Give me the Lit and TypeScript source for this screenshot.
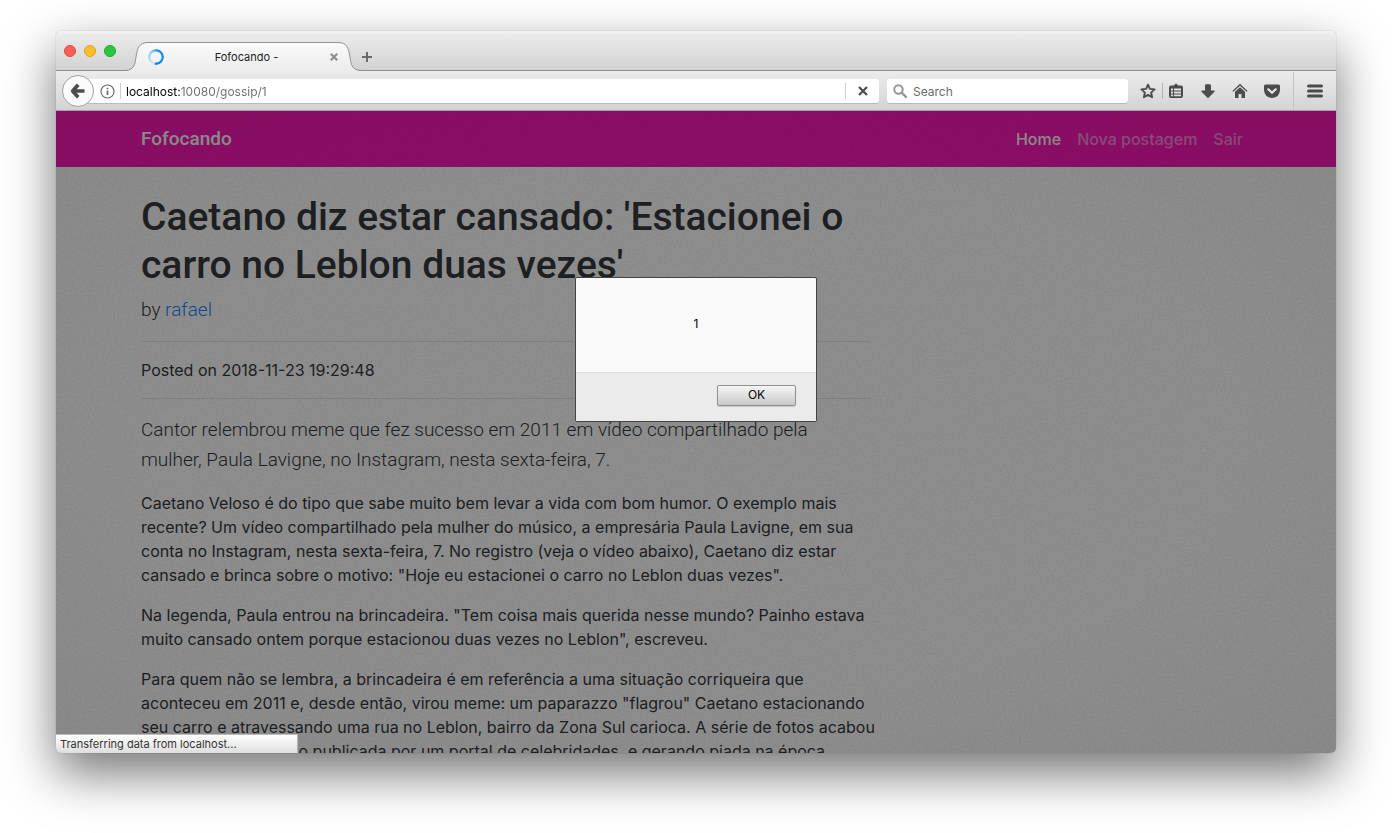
import { LitElement, html, css, svg } from "lit";
import { customElement } from "lit/decorators.js";

@customElement("tab-strip")
class TabStrip extends LitElement {
  static styles = css`
    :host { display: flex; align-items: flex-end; height: 40px; padding: 0 12px 0 8px; box-sizing: border-box;
      background: linear-gradient(#f4f4f4, #ebebeb 3px, #d2d2d2); border-bottom: 1px solid #8f8f8f;
      border-radius: 5px 5px 0 0; }
    .lights { display: flex; gap: 8px; align-self: center; }
    .light { width: 12px; height: 12px; padding: 0; border: 1px solid; border-radius: 50%; box-sizing: border-box; }
    .close { background: #ff5f57; border-color: #e2463f; }
    .min { background: #ffbd2e; border-color: #dfa023; }
    .max { background: #28c940; border-color: #1aab29; }
    .tab { display: grid; width: 236px; height: 30px; margin: 0 0 -1px 9px; }
    .shape, .inner { grid-area: 1 / 1; }
    .shape { width: 236px; height: 30px; display: block; }
    .inner { display: flex; align-items: center; padding: 2px 22px 0 23px; }
    .spinner { width: 16px; height: 16px; border-radius: 50%;
      background: conic-gradient(#1d96f0, #0a84ea 185deg, #cfe6f8 195deg, #8fcaf5 320deg, #3aa6f2);
      mask: radial-gradient(circle, transparent 5px, #000 6px, #000 8px, transparent 8px); }
    .title { flex: 1; text-align: center; font-size: 11px; line-height: 16px; color: #222; }
    .plain { border: 0; background: none; padding: 0; display: flex; }
    .new { margin: 0 0 7px 0; }
  `;
  render() {
    return html`
      <div class="lights">
        <button class="light close" aria-label="Close"></button>
        <button class="light min" aria-label="Minimize"></button>
        <button class="light max" aria-label="Zoom"></button>
      </div>
      <div class="tab">
        <svg class="shape" viewBox="0 0 236 30">
          <defs><linearGradient id="g" x1="0" y1="0" x2="0" y2="1">
            <stop offset="0" stop-color="#fafafa" /><stop offset="1" stop-color="#ececec" /></linearGradient></defs>
          <path fill="url(#g)" d="M0 30C10 29 10 22 11 16C12.500 7 14 1.500 23 1.500H213C222 1.500 223.500 7 225 16C226 22 226 29 236 30Z" />
          <path fill="none" stroke="#929292" d="M0 29.500C10 29 10 22 11 16C12.500 7 14 1.500 23 1.500H213C222 1.500 223.500 7 225 16C226 22 226 29 236 29.500" />
        </svg>
        <div class="inner">
          <span class="spinner"></span>
          <span class="title">Fofocando -</span>
          <button class="plain" aria-label="Close tab">
            <svg width="10" height="10" viewBox="0 0 10 10"><path d="M1.800 1.800L8.200 8.200M8.200 1.800L1.800 8.200" stroke="#8e8e8e" stroke-width="2.200" /></svg>
          </button>
        </div>
      </div>
      <button class="plain new" aria-label="New tab">
        <svg width="12" height="12" viewBox="0 0 12 12"><path d="M6 1V11M1 6H11" stroke="#6a6a6a" stroke-width="2" /></svg>
      </button>`;
  }
}

const icons = {
  star: svg`<path fill="none" stroke="#4c4c4c" stroke-width="1.900" stroke-linejoin="round" d="M8 1.700L9.900 5.900L14.600 6.400L11.100 9.600L12.100 14.300L8 11.900L3.900 14.300L4.900 9.600L1.400 6.400L6.100 5.900Z" />`,
  list: svg`<path fill="#4c4c4c" fill-rule="evenodd" d="M3 2.500H5.500L8 .5L10.500 2.500H13Q15 2.500 15 4.500V13Q15 15 13 15H3Q1 15 1 13V4.500Q1 2.500 3 2.500ZM3 5.500V7.500H5V5.500ZM6 5.500V7.500H13V5.500ZM3 8.500V10.500H5V8.500ZM6 8.500V10.500H13V8.500ZM3 11.500V13.300H5V11.500ZM6 11.500V13.300H13V11.500Z" />`,
  down: svg`<path fill="#4c4c4c" d="M5 2.500Q5 1.200 6.300 1.200H9.700Q11 1.200 11 2.500V7.500H14Q15.300 7.700 14.500 8.700L8.800 14.600Q8 15.200 7.200 14.600L1.500 8.700Q.7 7.700 2 7.500H5Z" />`,
  home: svg`<path fill="#4c4c4c" d="M8 .8L15.600 8L14.700 8.800L8 2.800L1.300 8.800L.4 8ZM8 4.200L13 8.700V15H9.500V11H6.500V15H3V8.700Z" />`,
  pocket: svg`<path fill="#4c4c4c" d="M1.500 1.500H14.500Q16 1.500 16 3V7Q15.500 14.500 8 15Q.5 14.500 0 7V3Q0 1.500 1.500 1.500Z" /><path fill="none" stroke="#e6e6e6" stroke-width="2.200" stroke-linecap="round" stroke-linejoin="round" d="M4.300 6.300L8 9.800L11.700 6.300" />`,
  menu: svg`<path fill="none" stroke="#4c4c4c" stroke-width="3" stroke-linecap="round" d="M1.500 3H14.500M1.500 8H14.500M1.500 13H14.500" />`,
};

@customElement("tool-bar")
class ToolBar extends LitElement {
  static styles = css`
    :host { display: flex; align-items: center; height: 40px; box-sizing: border-box; padding: 1px 0 0 6px;
      background: linear-gradient(#ececec, #d4d4d4); border-bottom: 1px solid #a9a0a6; }
    button { border: 0; padding: 0; background: none; display: flex; align-items: center; justify-content: center; }
    .back { width: 32px; height: 32px; border-radius: 50%; background: #fbfbfb; border: 1px solid #a0a0a0;
      box-sizing: border-box; margin-right: -16px; z-index: 1; flex: none; }
    .field { display: flex; align-items: center; height: 24px; background: #fff; border-radius: 3px; box-shadow: 0 1px 0 #b9b9b9; }
    .url { flex: 1; padding-left: 22px; }
    .bar { width: 1px; height: 16px; background: #cfcfcf; }
    .info { margin-right: 5px; }
    input { flex: 1; min-width: 0; border: 0; outline: 0; padding: 2px 0 0; background: none; font-family: inherit; font-size: 12px; line-height: 16px; }
    .address { margin-left: 5px; background: linear-gradient(to right, #000 54px, #6c6c6c 54px); -webkit-background-clip: text;
      background-clip: text; -webkit-text-fill-color: transparent; }
    .stop { width: 33px; height: 24px; }
    .search { width: 235px; padding-left: 6px; margin: 0 10px 0 8px; gap: 5px; }
    .search input::placeholder { color: #6c6c6c; opacity: 1; }
    .tool { width: 20px; height: 24px; }
    .tools { display: flex; align-items: center; }
    .tools .bar { margin: 0 3px 0 4px; background: #b5b5b5; }
    .rest { display: flex; gap: 12px; margin-right: 11px; }
    .menu { width: 43px; height: 38px; border-left: 1px solid #c2c2c2; }
  `;
  tool(name: keyof typeof icons, label: string) {
    return html`<button class="tool" aria-label=${label}><svg width="16" height="16" viewBox="0 0 16 16">${icons[name]}</svg></button>`;
  }
  render() {
    return html`
      <button class="back" aria-label="Back">
        <svg width="16" height="16" viewBox="0 0 16 16"><path fill="none" stroke="#4c4c4c" stroke-width="3.600" stroke-linejoin="round" d="M8.200 1.800L2.600 8L8.200 14.200M3 8H14.500" /></svg>
      </button>
      <div class="field url">
        <button class="info" aria-label="Site information">
          <svg width="15" height="15" viewBox="0 0 15 15"><circle cx="7.500" cy="7.500" r="6.500" fill="none" stroke="#6c6c6c" stroke-width="1.200" /><path d="M7.500 6.500V11M7.500 3.700V5.200" stroke="#6c6c6c" stroke-width="1.700" /></svg>
        </button>
        <span class="bar"></span>
        <input class="address" aria-label="Address" value="localhost:10080/gossip/1" />
        <span class="bar"></span>
        <button class="stop" aria-label="Stop">
          <svg width="10" height="10" viewBox="0 0 10 10"><path d="M1 1L9 9M9 1L1 9" stroke="#4c4c4c" stroke-width="2.200" /></svg>
        </button>
      </div>
      <div class="field search">
        <svg width="15" height="15" viewBox="0 0 15 15"><circle cx="5.500" cy="5.500" r="4.200" fill="none" stroke="#969696" stroke-width="2" /><path d="M8.700 8.700L13 13" stroke="#969696" stroke-width="2.400" stroke-linecap="round" /></svg>
        <input aria-label="Search" placeholder="Search" />
      </div>
      <div class="tools">
        ${this.tool("star", "Bookmark")}
        <span class="bar"></span>
        <div class="rest">
          ${this.tool("list", "Bookmarks list")} ${this.tool("down", "Downloads")} ${this.tool("home", "Home page")}
          ${this.tool("pocket", "Pocket")}
        </div>
      </div>
      <button class="menu" aria-label="Menu"><svg width="16" height="16" viewBox="0 0 16 16">${icons.menu}</svg></button>`;
  }
}

@customElement("gossip-page")
class GossipPage extends LitElement {
  static styles = css`
    :host { display: block; background: #fff; color: #212529; font-size: 16px; line-height: 24px; }
    .container { max-width: 1110px; margin: 0 auto; }
    .nav { background: #fc00b2; }
    .bar { display: flex; justify-content: space-between; align-items: center; height: 56px; }
    a { text-decoration: none; color: #007bff; }
    .brand { color: #fff; font-family: Roboto, Inter, sans-serif; font-size: 19px; font-weight: 500; line-height: 30px; }
    .links { display: flex; gap: 16px; padding-right: 8px; font-weight: 500; }
    .links a { color: rgba(255, 255, 255, 0.5); }
    .links .active { color: #fff; }
    .post { max-width: 730px; }
    h1 { margin: 26px 0 6px; font-family: Roboto, Inter, sans-serif; font-size: 39px; line-height: 48px; font-weight: 500; }
    p { margin: 0 -10px 16px 0; }
    .lead { font-family: Roboto, Inter, sans-serif; font-size: 19px; line-height: 30px; font-weight: 300; }
    hr { border: 0; border-top: 1px solid rgba(0, 0, 0, 0.1); margin: 16px 0; }
  `;
  render() {
    return html`
      <nav class="nav"><div class="container bar">
        <a class="brand" href="#">Fofocando</a>
        <div class="links"><a class="active" href="#">Home</a><a href="#">Nova postagem</a><a href="#">Sair</a></div>
      </div></nav>
      <div class="container"><article class="post">
        <h1>Caetano diz estar cansado: 'Estacionei o carro no Leblon duas vezes'</h1>
        <p class="lead">by <a href="#">rafael</a></p>
        <hr />
        <p>Posted on 2018-11-23 19:29:48</p>
        <hr />
        <p class="lead">Cantor relembrou meme que fez sucesso em 2011 em vídeo compartilhado pela<br />mulher, Paula Lavigne, no Instagram, nesta sexta-feira, 7.</p>
        <p>Caetano Veloso é do tipo que sabe muito bem levar a vida com bom humor. O exemplo mais recente? Um vídeo compartilhado pela mulher do músico, a empresária Paula Lavigne, em sua conta no Instagram, nesta sexta-feira, 7. No registro (veja o vídeo abaixo), Caetano diz estar cansado e brinca sobre o motivo: "Hoje eu estacionei o carro no Leblon duas vezes".</p>
        <p>Na legenda, Paula entrou na brincadeira. "Tem coisa mais querida nesse mundo? Painho estava muito cansado ontem porque estacionou duas vezes no Leblon", escreveu.</p>
        <p>Para quem não se lembra, a brincadeira é em referência a uma situação corriqueira que aconteceu em 2011 e, desde então, virou meme: um paparazzo "flagrou" Caetano estacionando seu carro e atravessando uma rua no Leblon, bairro da Zona Sul carioca. A série de fotos acabou virando notícia, sendo publicada por um portal de celebridades, e gerando piada na época.</p>
      </article></div>`;
  }
}

@customElement("app-root")
class AppRoot extends LitElement {
  static styles = css`
    :host { display: flex; box-sizing: border-box; height: 100vh; padding: 31px 56px 80px; background: #fff;
      overflow: hidden; font-family: Inter, "Liberation Sans", sans-serif; }
    .window { flex: 1; min-width: 0; display: flex; flex-direction: column; border-radius: 5px;
      box-shadow: 0 0 1px rgba(0, 0, 0, 0.4), 0 20px 50px rgba(0, 0, 0, 0.55); }
    tab-strip, tool-bar { flex: none; }
    .view { flex: 1; min-height: 0; position: relative; overflow: hidden; border-radius: 0 0 5px 5px; }
    .dim { position: absolute; inset: 0; display: flex; justify-content: center; align-items: flex-start; padding-top: 166px;
      background: radial-gradient(ellipse farthest-corner, rgba(26, 26, 26, 0.49) 60%, rgba(26, 26, 26, 0.51)); }
    .grain { position: absolute; inset: 0; width: 100%; height: 100%; }
    .dialog { position: relative; width: 240px; border: 1px solid #444; border-radius: 2px; background: #f9f9f9; font-size: 12px; line-height: 16px; color: #000; }
    .message { padding: 38px 20px 40px; text-align: center; }
    .actions { display: flex; justify-content: flex-end; padding: 12px 20px 15px; background: #ebebeb; border-top: 1px solid #dcdcdc; }
    .ok { width: 79px; height: 21px; padding: 0 0 2px; border: 1px solid #909090; border-radius: 2px; font-family: inherit; font-size: 12px; line-height: 16px;
      color: #000; background: linear-gradient(#f6f6f6, #c8c8c8); box-shadow: 0 1px 1px rgba(0, 0, 0, 0.15); }
    .status { position: absolute; left: 0; bottom: 0; width: 242px; height: 19px; box-sizing: border-box; padding-left: 4px; font-size: 11px; line-height: 19px;
      color: #333; background: linear-gradient(#fff, #dedede); border-right: 1px solid #b5b5b5; border-top: 1px solid #bbb; }
  `;
  render() {
    return html`
      <div class="window">
        <tab-strip></tab-strip>
        <tool-bar></tool-bar>
        <div class="view">
          <gossip-page></gossip-page>
          <div class="dim">
            <svg class="grain" aria-hidden="true">
              <filter id="n"><feTurbulence type="fractalNoise" baseFrequency="0.5" numOctaves="2" />
                <feColorMatrix values="0 0 0 0 0  0 0 0 0 0  0 0 0 0 0  0.11 0 0 0 -0.036" /></filter>
              <rect width="100%" height="100%" filter="url(#n)" />
            </svg>
            <div class="dialog" role="dialog" aria-label="Alert">
              <div class="message">1</div>
              <div class="actions"><button class="ok">OK</button></div>
            </div>
          </div>
          <div class="status">Transferring data from localhost...</div>
        </div>
      </div>`;
  }
}
